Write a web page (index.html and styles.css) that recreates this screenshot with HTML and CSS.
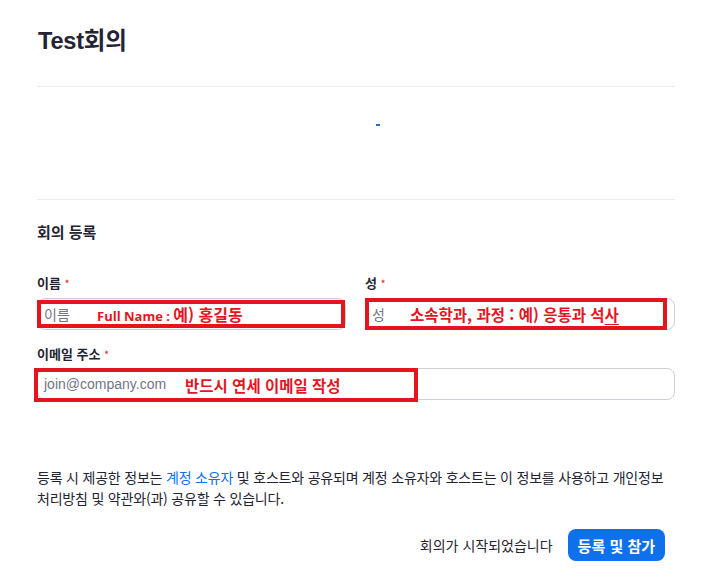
FILE: index.html
```html
<!DOCTYPE html>
<html lang="ko">
<head>
<meta charset="utf-8">
<link rel="stylesheet" href="styles.css">
</head>
<body>
<div class="page">
  <header class="head">
    <h1 class="title">Test회의</h1>
  </header>
  <div class="banner"><span class="mark"></span></div>
  <section class="form">
    <h2 class="section-title">회의 등록</h2>
    <div class="row two">
      <div class="field">
        <label class="label">이름 <span class="req">*</span></label>
        <div class="input-wrap">
          <div class="input">이름</div>
          <div class="note note-name"><span class="en">Full Name : </span>예) 홍길동</div>
        </div>
      </div>
      <div class="field">
        <label class="label">성 <span class="req">*</span></label>
        <div class="input-wrap">
          <div class="input">성</div>
          <div class="note note-last">소속학과, 과정 : 예) 응통과 석<u>사</u></div>
        </div>
      </div>
    </div>
    <div class="row">
      <div class="field">
        <label class="label">이메일 주소 <span class="req">*</span></label>
        <div class="input-wrap">
          <div class="input email">join@company.com</div>
          <div class="note note-mail">반드시 연세 이메일 작성</div>
        </div>
      </div>
    </div>
    <p class="info">등록 시 제공한 정보는 <a class="link">계정 소유자</a> 및 호스트와 공유되며 계정 소유자와 호스트는 이 정보를 사용하고 개인정보 처리방침 및 약관와(과) 공유할 수 있습니다.</p>
    <div class="actions">
      <span class="status">회의가 시작되었습니다</span>
      <button class="btn">등록 및 참가</button>
    </div>
  </section>
</div>
</body>
</html>
```

FILE: styles.css
```css
* { box-sizing: border-box; }
body {
  margin: 0;
  background: #fff;
  font-family: "Noto Sans CJK KR", "Noto Sans", sans-serif;
  color: #232333;
}
.page {
  width: 638px;
  margin-left: 37px;
}
.head {
  height: 87px;
  border-bottom: 1px solid #ececf0;
  padding-top: 25px;
}
.title {
  margin: 0 0 0 1px;
  font-family: "Liberation Sans", "Noto Sans CJK KR", sans-serif;
  font-size: 23.5px;
  font-weight: 700;
  line-height: 32px;
  color: #232333;
  letter-spacing: -0.2px;
}
.banner {
  height: 113px;
  border-bottom: 1px solid #ececf0;
  position: relative;
}
.mark {
  position: absolute;
  left: 339px;
  top: 37px;
  width: 4px;
  height: 2px;
  background: #2d6fd0;
}
.form { padding-top: 20px; }
.section-title {
  margin: 0;
  font-size: 15px;
  font-weight: 700;
  line-height: 24px;
  color: #232333;
}
.row { display: flex; gap: 19px; }
.row.two { margin-top: 29px; }
.row.two .field { flex: 0 0 309px; }
.row.two .field + .field { flex: 0 0 310px; }
.row .field { flex: 1; }
.row + .row { margin-top: 14px; }
.label {
  display: block;
  font-size: 13px;
  font-weight: 700;
  line-height: 20px;
  color: #232333;
  margin-bottom: 4px;
}
.row.two .label { margin-bottom: 5px; }
.req { color: #de2828; font-weight: 400; font-size: 11px; }
.input-wrap { position: relative; }
.input {
  height: 32px;
  border: 1px solid #cfcfd6;
  border-radius: 8px;
  padding: 0 6px;
  font-size: 14px;
  line-height: 30px;
  color: #747487;
}
.input.email { font-family: "Liberation Sans", sans-serif; }
.note {
  position: absolute;
  border: 4px solid #e3161f;
  color: #e3161f;
  font-weight: 700;
  font-size: 15.5px;
  line-height: 20px;
}
.note-name { left: 0; top: 2px; width: 308px; height: 28px; padding-left: 56px; font-size: 16px; }
.note-name .en { font-family: "Open Sans", sans-serif; font-size: 13px; }
.note-last { left: 0; top: 0; width: 302px; height: 32px; padding: 2px 0 0 41px; }
.note-last u { text-decoration-thickness: 1px; text-underline-offset: 3px; }
.note-mail { left: -3px; top: 0; width: 384px; height: 34px; padding: 3px 0 0 147px; }
.info {
  margin: 67px 0 0;
  font-size: 14px;
  line-height: 21px;
  color: #232333;
  word-break: keep-all;
  letter-spacing: -0.2px;
}
.link { color: #0e72ed; text-decoration: none; }
.actions {
  display: flex;
  justify-content: flex-end;
  align-items: center;
  gap: 15px;
  margin-top: 20px;
  padding-right: 10px;
}
.status { font-size: 14px; color: #232333; }
.btn {
  font-family: "Noto Sans CJK KR", sans-serif;
  background: #0e71eb;
  color: #fff;
  border: 0;
  border-radius: 8px;
  font-size: 15px;
  font-weight: 700;
  height: 32px;
  padding: 0 10px;
}
```
